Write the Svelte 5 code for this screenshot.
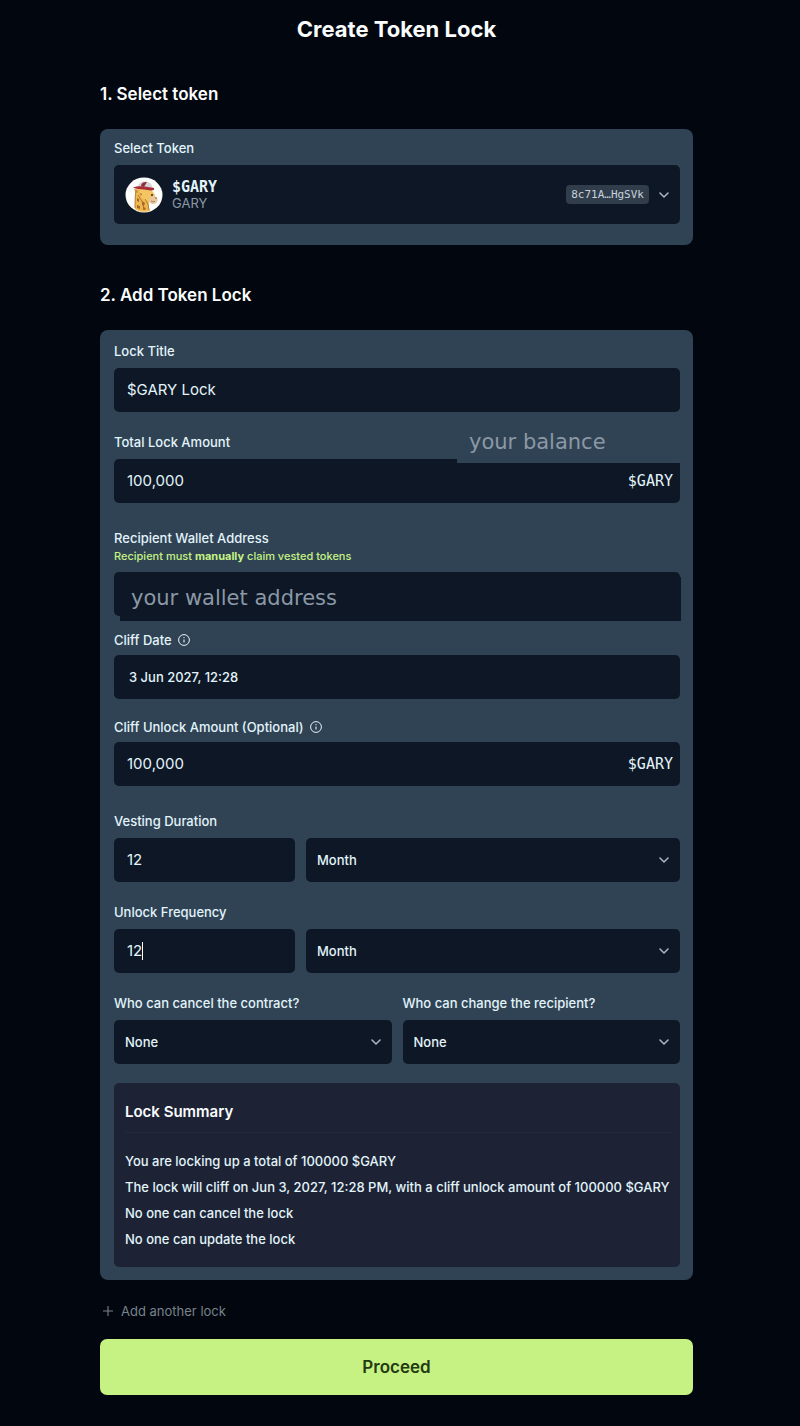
<script>
  const token = { symbol: "$GARY", name: "GARY", address: "8c71A…HgSVk" };
  const units = ["Minute", "Hour", "Day", "Week", "Month", "Year"];
  const parties = ["None", "Only sender", "Only recipient", "Both"];

  let title = $state("$GARY Lock");
  let amount = $state("100,000");
  let wallet = $state("");
  let cliffDate = $state("3 Jun 2027, 12:28");
  let cliffAmount = $state("100,000");
  let duration = $state("12");
  let durationUnit = $state("Month");
  let frequency = $state("12");
  let frequencyUnit = $state("Month");
  let canceller = $state("None");
  let updater = $state("None");

  const plain = (v) => v.replaceAll(",", "");
  const who = (v) => (v === "None" ? "No one" : v);

  let summary = $derived([
    `You are locking up a total of ${plain(amount)} ${token.symbol}`,
    `The lock will cliff on Jun 3, 2027, 12:28 PM, with a cliff unlock amount of ${plain(cliffAmount)} ${token.symbol}`,
    `${who(canceller)} can cancel the lock`,
    `${who(updater)} can update the lock`,
  ]);
</script>

{#snippet chevron()}
  <svg class="chevron" viewBox="0 0 12 12" width="12" height="12" fill="none" aria-hidden="true">
    <path d="M2 4 6 8 10 4" stroke="currentColor" stroke-width="1.6" stroke-linecap="round" stroke-linejoin="round" />
  </svg>
{/snippet}

{#snippet info()}
  <svg class="info" viewBox="0 0 12 12" width="12" height="12" fill="none" aria-hidden="true">
    <circle cx="6" cy="6" r="5.4" stroke="currentColor" stroke-width="1" />
    <path d="M6 5.4v3.2" stroke="currentColor" stroke-width="1.1" />
    <circle cx="6" cy="3.6" r=".7" fill="currentColor" />
  </svg>
{/snippet}

<main>
  <h1>Create Token Lock</h1>

  <h2>1. Select token</h2>
  <section class="panel token-panel">
    <span class="label" id="token-label">Select Token</span>
    <button class="token" type="button" aria-labelledby="token-label">
      <svg class="avatar" viewBox="0 0 38 36" width="38" height="36" aria-hidden="true">
        <ellipse cx="19" cy="18" rx="18.5" ry="17.5" fill="#fdfdfb" />
        <path d="M11 12c-1 5-1 13-1 20 4 3 10 3.500 15 2-1-3-2-5-1-9l-3-4 3-8z" fill="#edb84e" />
        <path d="M14 12c3-2 9-2 12 0 1 2 3 4 4 6l-2 7c-4 1-8-1-12-5z" fill="#f3c663" />
        <path d="M26 20c2-2 6-1 6.500 2 .5 3-2 5.500-5 5-3-.5-5-4-1.500-7z" fill="#e9c7a0" />
        <path d="M11 13c-1 6-1 13-1 18M13 18l5 8 1 7M20 22l3 5 1 6" fill="none" stroke="#a8682b" stroke-width=".8" />
        <path d="m12 21 2 1v3l-2-1zM17 24l3 2-1 3-2-1zM12 28l3 1v3l-3-1zM18 30l3 1-1 2-2-1zM15 16l2 1-1 2z" fill="#a8682b" />
        <path d="M9 12c1 0 3 1 4 3l-2 1z" fill="#c58a3d" />
        <path d="M13 10c0-4 4-6 8-5.500 4 .5 6 3 6.500 6z" fill="#d5d4da" />
        <path d="M16 9c0-3 3-4.500 6-4l-3 5z" fill="#8f3238" />
        <path d="M8 10.500c3-1 7-1.500 11-1 4 .2 7 1 10 1.500v2c-3 1-7 0-10-.5-4-.5-8-.5-11-2z" fill="#a82d36" />
        <circle cx="27" cy="18" r="1" fill="#30261f" />
        <circle cx="31" cy="21" r=".7" fill="#735138" />
        <path d="M26 24c2 1 3 1 4 0" fill="none" stroke="#93653b" stroke-width=".8" />
      </svg>
      <span class="token-name">
        <strong class="mono">{token.symbol}</strong>
        <span>{token.name}</span>
      </span>
      <span class="chip">{token.address}</span>
      {@render chevron()}
    </button>
  </section>

  <h2>2. Add Token Lock</h2>
  <section class="panel lock-panel">
    <div class="group">
      <label class="label" for="title">Lock Title</label>
      <div class="field"><input id="title" bind:value={title} /></div>
    </div>

    <div class="group wide">
      <label class="label" for="amount">Total Lock Amount</label>
      <div class="field">
        <input id="amount" inputmode="decimal" bind:value={amount} />
        <span class="mono suffix">{token.symbol}</span>
        <span class="balance">your balance</span>
      </div>
    </div>

    <div class="group snug">
      <label class="label stacked" for="wallet">Recipient Wallet Address</label>
      <p class="note">Recipient must <b>manually</b> claim vested tokens</p>
      <div class="field">
        <input id="wallet" class="wallet" placeholder="your wallet address" bind:value={wallet} />
      </div>
    </div>

    <div class="group close">
      <label class="label" for="cliff-date">Cliff Date {@render info()}</label>
      <div class="field"><input id="cliff-date" class="date" bind:value={cliffDate} /></div>
    </div>

    <div class="group wide">
      <label class="label" for="cliff-amount">Cliff Unlock Amount (Optional) {@render info()}</label>
      <div class="field">
        <input id="cliff-amount" inputmode="decimal" bind:value={cliffAmount} />
        <span class="mono suffix">{token.symbol}</span>
      </div>
    </div>

    <div class="group">
      <label class="label" for="duration">Vesting Duration</label>
      <div class="period">
        <div class="field"><input id="duration" inputmode="numeric" bind:value={duration} /></div>
        <div class="field">
          <select aria-label="Vesting duration unit" bind:value={durationUnit}>
            {#each units as unit (unit)}<option>{unit}</option>{/each}
          </select>
          {@render chevron()}
        </div>
      </div>
    </div>

    <div class="group">
      <label class="label" for="frequency">Unlock Frequency</label>
      <div class="period">
        <div class="field">
          <input id="frequency" inputmode="numeric" bind:value={frequency} />
          <i class="caret"></i>
        </div>
        <div class="field">
          <select aria-label="Unlock frequency unit" bind:value={frequencyUnit}>
            {#each units as unit (unit)}<option>{unit}</option>{/each}
          </select>
          {@render chevron()}
        </div>
      </div>
    </div>

    <div class="rights">
      <div>
        <label class="label" for="canceller">Who can cancel the contract?</label>
        <div class="field">
          <select id="canceller" bind:value={canceller}>
            {#each parties as party (party)}<option>{party}</option>{/each}
          </select>
          {@render chevron()}
        </div>
      </div>
      <div>
        <label class="label" for="updater">Who can change the recipient?</label>
        <div class="field">
          <select id="updater" bind:value={updater}>
            {#each parties as party (party)}<option>{party}</option>{/each}
          </select>
          {@render chevron()}
        </div>
      </div>
    </div>

    <div class="summary">
      <h3>Lock Summary</h3>
      {#each summary as line (line)}
        <p>{line}</p>
      {/each}
    </div>
  </section>

  <button class="add" type="button">
    <svg viewBox="0 0 12 12" width="12" height="12" aria-hidden="true">
      <path d="M6 1v10M1 6h10" stroke="currentColor" stroke-width="1.1" />
    </svg>
    Add another lock
  </button>
  <button class="proceed" type="button">Proceed</button>
</main>

<style>
  :global(body) { background: #02070f; }
  main {
    --panel: #304354;
    --field: #0e1725;
    --text: #e2f4fb;
    --muted: #8b98a5;
    padding: 12px 107px 31px 100px;
    color: var(--text);
    font-family: Inter, sans-serif;
    font-size: 13px;
    line-height: 20px;
  }
  main, main * { box-sizing: border-box; }
  h1, h2, h3, p { margin: 0; }
  h1, h2, h3 { color: #fafcfd; font-weight: 600; }
  h1 {
    margin-bottom: 35px;
    font-size: 22px;
    font-weight: 700;
    line-height: 34px;
    text-align: center;
  }
  h2 {
    margin-bottom: 21px;
    font-size: 17px;
    line-height: 27px;
  }
  input, select, button {
    margin: 0;
    border: 0;
    outline: 0;
    color: inherit;
    font: inherit;
  }
  .panel {
    border-radius: 8px;
    background: var(--panel);
  }
  .token-panel {
    margin-bottom: 37px;
    padding: 9px 13px 21px 14px;
  }
  .lock-panel { padding: 11px 13px 13px 14px; }
  .label {
    display: flex;
    align-items: center;
    gap: 6px;
    margin-bottom: 7px;
    font-weight: 500;
  }
  .label.stacked { margin-bottom: 0; }
  .label:has(:global(.info)) { margin-bottom: 5px; }
  .mono { font-family: "DejaVu Sans Mono", monospace; font-size: 15px; }
  .token {
    display: flex;
    align-items: center;
    gap: 9px;
    width: 100%;
    height: 59px;
    padding: 0 10px 0 11px;
    border-radius: 5px;
    background: var(--field);
    text-align: left;
  }
  .token-name {
    display: grid;
    margin-right: auto;
    color: var(--muted);
    line-height: 16px;
  }
  .token-name strong { color: var(--text); }
  .chip {
    padding: 0 5px;
    border-radius: 4px;
    background: #323d4b;
    color: #c6d2dc;
    font: 11px/19px "DejaVu Sans Mono", monospace;
  }
  .chevron { flex: none; color: #a9b3bf; }
  .info { flex: none; }
  .group { margin-bottom: 20px; }
  .group.wide { margin-bottom: 25px; }
  .group.snug { margin-bottom: 14px; }
  .group.close { margin-bottom: 18px; }
  .field {
    position: relative;
    display: flex;
    align-items: center;
    height: 44px;
    border-radius: 5px;
    background: var(--field);
  }
  .field input {
    flex: 1;
    min-width: 0;
    height: 100%;
    padding: 0 13px 1px;
    background: none;
    font-size: 15px;
  }
  .field input.date {
    padding: 0 15px;
    font-size: 13px;
    font-weight: 500;
  }
  .field select {
    width: 100%;
    height: 100%;
    padding: 0 32px 0 11px;
    appearance: none;
    background: none;
    font-weight: 500;
  }
  .field .chevron {
    position: absolute;
    right: 10px;
    pointer-events: none;
  }
  .suffix { padding-right: 7px; }
  .balance {
    position: absolute;
    right: 0;
    bottom: 40px;
    width: 223px;
    padding: 6px 12px;
    background: var(--panel);
    color: var(--muted);
    font: 21px/30px "DejaVu Sans", sans-serif;
  }
  .field input.wallet {
    position: absolute;
    inset: 5px -1px -5px 6px;
    padding: 0 11px 3px;
    background: var(--field);
    font: 21px "DejaVu Sans", sans-serif;
  }
  .wallet::placeholder { color: var(--muted); opacity: 1; }
  .note {
    margin-bottom: 7px;
    color: #c5f283;
    font-size: 11px;
    font-weight: 500;
    line-height: 17px;
  }
  .period {
    display: grid;
    grid-template-columns: minmax(0, 181fr) minmax(0, 374fr);
    gap: 11px;
  }
  .caret {
    position: absolute;
    left: 28px;
    width: 1px;
    height: 18px;
    background: #fff;
  }
  .rights {
    display: grid;
    grid-template-columns: 1fr 1fr;
    gap: 11px;
    margin-bottom: 19px;
  }
  .summary {
    padding: 9px 9px 15px 11px;
    border-radius: 5px;
    background: #1d2334;
    font-weight: 500;
    line-height: 26px;
  }
  h3 {
    margin-bottom: 15px;
    border-bottom: 1px solid #212b3c;
    font-size: 15px;
    line-height: 40px;
  }
  .add {
    display: flex;
    align-items: center;
    gap: 7px;
    margin: 21px 0 18px;
    padding: 0 2px;
    background: none;
    color: #78828b;
  }
  .proceed {
    width: 100%;
    height: 56px;
    border-radius: 7px;
    background: #c6f283;
    color: #243a12;
    font-size: 17px;
    font-weight: 600;
  }
</style>
